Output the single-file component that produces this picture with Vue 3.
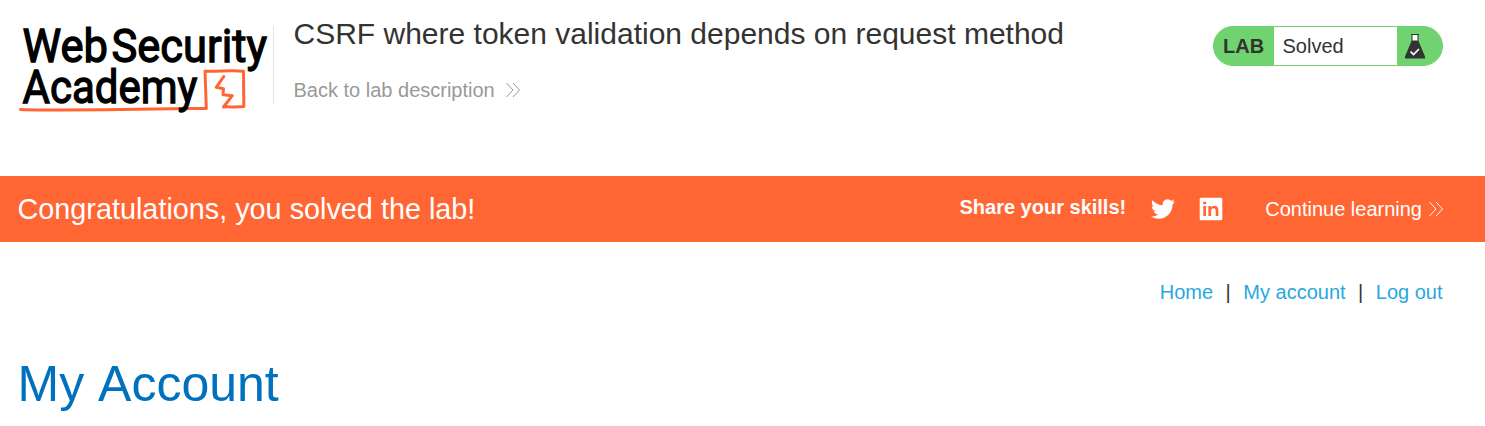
<script setup>
const links = ['Home', 'My account', 'Log out']
</script>

<template>
  <div class="page">
    <header class="header">
      <svg class="logo" width="256" height="100" viewBox="15 20 256 100">
        <path d="M20.500 109.400C60 111 140 109.500 206.300 108.400L205 71.200C218 71.600 232 70 243.500 71.200L243.800 106.500C236 107.500 228 106.500 223.500 107L232.300 95.700L223 94.700L223.500 88.700L216.200 87.300L223.800 76.500" fill="none" stroke="#ff6633" stroke-width="3" stroke-linejoin="round" stroke-linecap="round" />
        <g class="wordmark">
          <text x="22.500" y="61.700" textLength="85.500" lengthAdjust="spacingAndGlyphs">Web</text>
          <text x="111.500" y="61.700" textLength="155.500" lengthAdjust="spacingAndGlyphs">Security</text>
          <text x="22.500" y="103" textLength="175" lengthAdjust="spacingAndGlyphs">Academy</text>
        </g>
      </svg>
      <div class="titles">
        <h2>CSRF where token validation depends on request method</h2>
        <a class="back">Back to lab description
          <svg width="16" height="16" viewBox="0 0 16 16"><path d="M1.500 1L8 8L1.500 15M8 1L14.500 8L8 15" /></svg>
        </a>
      </div>
      <div class="status">
        <b>LAB</b>
        <span>Solved</span>
        <svg width="22" height="28" viewBox="0 0 22 28">
          <path d="M7.500 2H14.500V9L21 24.500V26.500H1V24.500L7.500 9Z" fill="#333332" />
          <path d="M8.500 3H13.500V8.500H8.500Z" fill="#fff" />
          <path d="M7 2.500H15" stroke="#333332" stroke-width="1" />
          <path d="M6.500 19.500L9.500 22.500L15 17" fill="none" stroke="#fff" stroke-width="1.700" />
        </svg>
      </div>
    </header>

    <section class="banner">
      <h4>Congratulations, you solved the lab!</h4>
      <div class="share">
        <b>Share your skills!</b>
        <svg class="twitter" width="24" height="24" viewBox="0 0 24 24"><path fill="#fff" d="M23.950 4.570a10 10 0 0 1-2.820.770 4.960 4.960 0 0 0 2.160-2.720c-.950.550-2 .950-3.130 1.180a4.920 4.920 0 0 0-8.380 4.480C7.690 8.100 4.070 6.130 1.640 3.160a4.920 4.920 0 0 0 1.520 6.570 4.900 4.900 0 0 1-2.230-.610v.060a4.920 4.920 0 0 0 3.950 4.830 5 5 0 0 1-2.210.080 4.940 4.940 0 0 0 4.600 3.420A9.870 9.870 0 0 1 0 19.540a13.990 13.990 0 0 0 7.550 2.210c9.050 0 14-7.500 14-13.980 0-.210 0-.420-.020-.630a9.940 9.940 0 0 0 2.420-2.570z" /></svg>
        <svg class="linkedin" width="24" height="24" viewBox="0 0 24 24">
          <rect x=".700" y=".700" width="22.600" height="22.600" rx="1.500" fill="#fff" />
          <path fill="#ff6633" d="M4.300 9H7V19H4.300ZM9.400 9H12V10.500C12.700 9.500 13.800 8.800 15.300 8.800C18.300 8.800 19.400 10.700 19.400 13.600V19H16.700V14.200C16.700 12.400 16.200 11.300 14.700 11.300C12.900 11.300 12.100 12.500 12.100 14.200V19H9.400Z" />
          <rect x="4.200" y="4.800" width="2.900" height="2.600" rx=".800" fill="#ff6633" />
        </svg>
        <a class="continue">Continue learning
          <svg width="16" height="16" viewBox="0 0 16 16"><path d="M1.500 1L8 8L1.500 15M8 1L14.500 8L8 15" /></svg>
        </a>
      </div>
    </section>

    <nav class="nav">
      <template v-for="(link, i) in links" :key="link">
        <span v-if="i">|</span>
        <a>{{ link }}</a>
      </template>
    </nav>
    <h1>My Account</h1>
  </div>
</template>

<style>
body { background: #fff; }
</style>

<style scoped>
.page {
  height: 426px;
  overflow: hidden;
  font: 20px/24px "Liberation Sans", Arial, sans-serif;
  color: #333332;
}
h1, h2, h4 { margin: 0; font-weight: 400; white-space: nowrap; }
.header {
  display: flex;
  align-items: flex-start;
  height: 176px;
  padding: 0 42px 0 15px;
  box-sizing: border-box;
}
.logo { display: block; margin-top: 20px; flex: none; overflow: visible; }
.wordmark {
  font: 400 46.500px Roboto, sans-serif;
  fill: #000;
  stroke: #000;
  stroke-width: 1.300px;
}
.titles {
  height: 78px;
  margin: 26px 0 0 2px;
  border-left: 1px solid #e3e3e3;
  padding-left: 19.500px;
}
.titles h2 { font-size: 30px; line-height: 36px; margin-top: -10px; }
.back { display: flex; align-items: center; gap: 10px; margin-top: 26px; color: #999; }
.back path, .continue path { fill: none; stroke: currentColor; stroke-width: 1; }
.status {
  display: flex;
  align-items: center;
  width: 230px;
  height: 40px;
  margin: 26px 0 0 auto;
  box-sizing: border-box;
  border: 1px solid #70d36f;
  border-radius: 20px;
  background: #70d36f;
  overflow: hidden;
}
.status b { width: 60px; padding-left: 9px; box-sizing: border-box; }
.status span {
  width: 123px;
  line-height: 38px;
  padding-left: 8.500px;
  box-sizing: border-box;
  background: #fff;
}
.status svg { margin-left: 7px; }
.banner {
  display: flex;
  align-items: center;
  justify-content: space-between;
  height: 66px;
  padding: 0 41px 0 17.500px;
  background: #ff6633;
  color: #fff;
}
.banner h4 { font-size: 28.800px; line-height: 34px; }
.share { display: flex; align-items: center; }
.share b { margin-top: -4px; }
.twitter { margin-left: 25px; }
.linkedin { margin-left: 24px; }
.continue { display: flex; align-items: center; gap: 6px; margin-left: 42px; }
.nav {
  display: flex;
  justify-content: flex-end;
  gap: 12.500px;
  padding: 38px 42.500px 0 0;
}
.nav a { color: #29a7df; }
h1 {
  margin: 50px 0 0 17.500px;
  font-size: 50px;
  line-height: 60px;
  color: #0071bc;
  font-kerning: none;
}
</style>
